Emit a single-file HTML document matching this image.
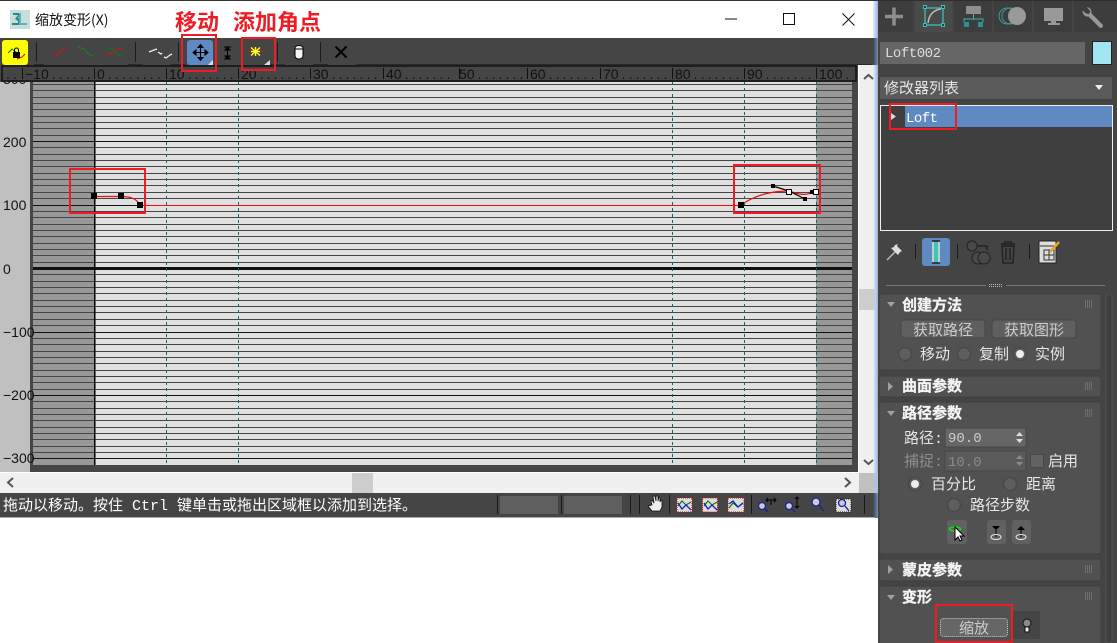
<!DOCTYPE html>
<html><head><meta charset="utf-8"><style>
html,body{margin:0;padding:0;background:#fff;width:1117px;height:643px;overflow:hidden}
svg{display:block}
text{white-space:pre}
.c{font-family:"Liberation Mono","WenQuanYi Zen Hei","Noto Sans CJK SC",monospace;font-size:15px;fill:#e6e6e6}
.h{font-family:"Liberation Mono","WenQuanYi Zen Hei","Noto Sans CJK SC",monospace;font-size:15px;fill:#f4f4f4;font-weight:bold;stroke:#f4f4f4;stroke-width:.3}
.r{font-family:"Liberation Sans",sans-serif;font-size:14px;fill:#111}
.y{font-family:"Liberation Sans",sans-serif;font-size:14px;fill:#111}
.m{font-family:"Liberation Mono",monospace;font-size:14px}
</style></head><body>
<svg width="1117" height="643" viewBox="0 0 1117 643" xmlns="http://www.w3.org/2000/svg">
<defs><linearGradient id="edge" x1="0" x2="1" y1="0" y2="0"><stop offset="0" stop-color="#f0f0f0"/><stop offset="1" stop-color="#8fb4e6"/></linearGradient>
<linearGradient id="edged" x1="0" x2="1" y1="0" y2="0"><stop offset="0" stop-color="#454545"/><stop offset="1" stop-color="#6a8cbc"/></linearGradient></defs>
<!-- window -->
<rect width="878" height="518" fill="#fff"/>
<rect width="878" height="1" fill="#333"/>
<rect x="873" y="1" width="5" height="37" fill="url(#edge)"/>
<rect x="10" y="10" width="20" height="19" fill="#c8dedd"/>
<path d="M13 13h8l-3 5 3 1v6h-9v-2h6v-2l-3-2 3-4h-5z" fill="#2a8a8a"/>
<path d="M21 13v10h6v2h-8V13z" fill="#5fb3b3"/>
<text x="35" y="25" font-family="'WenQuanYi Zen Hei','Noto Sans CJK SC',sans-serif" font-size="14" fill="#111">缩放变形(X)</text>
<path d="M725 19h12" stroke="#111"/>
<rect x="783.500" y="13.500" width="11" height="11" fill="none" stroke="#111"/>
<path d="M842.500 13.500l12 12M854.500 13.500l-12 12" stroke="#111"/>
<!-- toolbar -->
<rect x="0" y="38" width="873" height="27" fill="#454545"/>
<rect x="873" y="38" width="5" height="27" fill="url(#edged)"/>
<rect x="2" y="40" width="26" height="25" rx="3" fill="#ffff00"/>
<path d="M8 53l4-4 5 4" stroke="#0a7a0a" fill="none"/><path d="M17 59l5-2 3-3" stroke="#d00" fill="none"/>
<rect x="13" y="52" width="7" height="6" fill="#000"/><path d="M14.500 52v-2a2 2 0 0 1 4 0v2" stroke="#000" fill="none"/>
<g stroke="#1c1c1c"><path d="M36.500 42v20M135.500 42v20M178.500 42v20M277.500 42v20M320.500 42v20"/></g>
<g fill="#2a2a2a"><rect x="34" y="64" width="10" height="1"/><rect x="128" y="64" width="15" height="1"/><rect x="171" y="64" width="15" height="1"/><rect x="270" y="64" width="15" height="1"/><rect x="313" y="64" width="15" height="1"/><rect x="356" y="64" width="516" height="1"/></g>
<path d="M52 56l5-1 3-4 6-3" stroke="#d81010" fill="none"/>
<path d="M78 47l6 2 4 5 5 2" stroke="#0a8a1a" fill="none"/>
<path d="M106 55l6-2 4-3 6-2" stroke="#d81010" fill="none"/><path d="M106 47l6 2 4 4 6 3" stroke="#0a7a1a" fill="none"/>
<path d="M149 52l5-2 3-1m1 3l3 2 1-1m2 4l2 1 4-3 2-1" stroke="#eee" stroke-width="1.300" fill="none"/>
<rect x="187" y="40" width="26" height="25" rx="3" fill="#5f8ac1"/>
<path d="M208 65l5-5v5z" fill="#ddd"/>
<path d="M200.500 45v15M193 52.500h15M198 47.500l2.500-3 2.500 3zM198 57.500l2.500 3 2.500-3zM196 50l-3 2.500 3 2.500zM205 50l3 2.500-3 2.500z" stroke="#000" fill="#000"/>
<path d="M224 47h7M224 59h7M227.500 47v12M225 50l2.500-3 2.500 3zM225 56l2.500 3 2.500-3z" stroke="#000" fill="#000" stroke-width="1"/>
<path d="M248 51h16" stroke="#e01010" stroke-width="1.200"/>
<path d="M255.500 47v9M251 47.500l9 8M260 47.500l-9 8M251 51.500h9" stroke="#ffff20" stroke-width="1.400"/>
<path d="M264 65l6-5v5z" fill="#ddd"/>
<path d="M295 48a4 2.500 0 0 1 8 0v8a4 3 0 0 1-8 0z" fill="#f4f4f4" stroke="#000"/><path d="M295 49h8" stroke="#000"/>
<path d="M335.500 46.500l11 11M346.500 46.500l-11 11" stroke="#000" stroke-width="2"/>
<!-- graph -->
<rect x="0" y="81" width="31" height="392" fill="#c0c0c0"/>
<rect x="30" y="81" width="828" height="392" fill="#464646"/>
<rect x="33" y="82" width="61" height="383" fill="#989898"/>
<rect x="94" y="82" width="722" height="383" fill="#e0e0e0"/>
<rect x="816" y="82" width="36" height="383" fill="#989898"/>
<g fill="#454545">
<rect x="33" y="84" width="819" height="1"/><rect x="33" y="90" width="819" height="1"/><rect x="33" y="97" width="819" height="1"/><rect x="33" y="103" width="819" height="1"/><rect x="33" y="109" width="819" height="1"/><rect x="33" y="116" width="819" height="1"/><rect x="33" y="122" width="819" height="1"/><rect x="33" y="128" width="819" height="1"/><rect x="33" y="135" width="819" height="1"/><rect x="33" y="147" width="819" height="1"/><rect x="33" y="154" width="819" height="1"/><rect x="33" y="160" width="819" height="1"/><rect x="33" y="166" width="819" height="1"/><rect x="33" y="173" width="819" height="1"/><rect x="33" y="179" width="819" height="1"/><rect x="33" y="185" width="819" height="1"/><rect x="33" y="192" width="819" height="1"/><rect x="33" y="198" width="819" height="1"/><rect x="33" y="211" width="819" height="1"/><rect x="33" y="217" width="819" height="1"/><rect x="33" y="224" width="819" height="1"/><rect x="33" y="230" width="819" height="1"/><rect x="33" y="236" width="819" height="1"/><rect x="33" y="243" width="819" height="1"/><rect x="33" y="249" width="819" height="1"/><rect x="33" y="255" width="819" height="1"/><rect x="33" y="262" width="819" height="1"/><rect x="33" y="274" width="819" height="1"/><rect x="33" y="281" width="819" height="1"/><rect x="33" y="287" width="819" height="1"/><rect x="33" y="293" width="819" height="1"/><rect x="33" y="300" width="819" height="1"/><rect x="33" y="306" width="819" height="1"/><rect x="33" y="312" width="819" height="1"/><rect x="33" y="319" width="819" height="1"/><rect x="33" y="325" width="819" height="1"/><rect x="33" y="338" width="819" height="1"/><rect x="33" y="344" width="819" height="1"/><rect x="33" y="351" width="819" height="1"/><rect x="33" y="357" width="819" height="1"/><rect x="33" y="363" width="819" height="1"/><rect x="33" y="370" width="819" height="1"/><rect x="33" y="376" width="819" height="1"/><rect x="33" y="382" width="819" height="1"/><rect x="33" y="389" width="819" height="1"/><rect x="33" y="401" width="819" height="1"/><rect x="33" y="408" width="819" height="1"/><rect x="33" y="414" width="819" height="1"/><rect x="33" y="420" width="819" height="1"/><rect x="33" y="427" width="819" height="1"/><rect x="33" y="433" width="819" height="1"/><rect x="33" y="439" width="819" height="1"/><rect x="33" y="446" width="819" height="1"/><rect x="33" y="452" width="819" height="1"/>
</g>
<g fill="#111"><rect x="33" y="141" width="819" height="1"/><rect x="33" y="205" width="819" height="1"/><rect x="33" y="332" width="819" height="1"/><rect x="33" y="395" width="819" height="1"/><rect x="33" y="458" width="819" height="1"/><rect x="33" y="267" width="819" height="3"/></g>
<rect x="94" y="82" width="1.500" height="383" fill="#000"/>
<g stroke="#0c6a6a" stroke-dasharray="3 3" shape-rendering="crispEdges"><path d="M166.500 82v383M238.500 82v383M672.500 82v383M744.500 82v383M816.500 82v383"/></g>
<text x="3" y="84" class="y">300</text>
<text x="3" y="147" class="y">200</text>
<text x="3" y="210" class="y">100</text>
<text x="3" y="274" class="y">0</text>
<text x="3" y="337" class="y">−100</text>
<text x="3" y="400" class="y">−200</text>
<text x="3" y="463" class="y">−300</text>
<rect x="0" y="465" width="30" height="8" fill="#c0c0c0"/>
<!-- ruler -->
<rect x="0" y="65" width="858" height="17" fill="#454545"/>
<rect x="2" y="66" width="854" height="15" fill="#454545" stroke="#111" stroke-width="1.500"/>
<g stroke="#111"><path d="M22.500 68v11M94.500 68v11M166.500 68v11M238.500 68v11M310.500 68v11M383.500 68v11M459.500 68v11M527.500 68v11M600.500 68v11M672.500 68v11M744.500 68v11M816.500 68v11"/></g>
<text x="6" y="79" class="r" letter-spacing="3.100">..</text>
<text x="25" y="79" class="r">−10<tspan dx="3" letter-spacing="3.100">......</tspan></text>
<text x="97" y="79" class="r">0<tspan dx="3" letter-spacing="3.100">........</tspan></text>
<text x="169" y="79" class="r">10<tspan dx="3" letter-spacing="3.100">.......</tspan></text>
<text x="241" y="79" class="r">20<tspan dx="3" letter-spacing="3.100">.......</tspan></text>
<text x="313" y="79" class="r">30<tspan dx="3" letter-spacing="3.100">.......</tspan></text>
<text x="386" y="79" class="r">40<tspan dx="3" letter-spacing="3.100">.......</tspan></text>
<text x="459" y="79" class="r">50<tspan dx="3" letter-spacing="3.100">.......</tspan></text>
<text x="530" y="79" class="r">60<tspan dx="3" letter-spacing="3.100">.......</tspan></text>
<text x="603" y="79" class="r">70<tspan dx="3" letter-spacing="3.100">.......</tspan></text>
<text x="675" y="79" class="r">80<tspan dx="3" letter-spacing="3.100">.......</tspan></text>
<text x="747" y="79" class="r">90<tspan dx="3" letter-spacing="3.100">.......</tspan></text>
<text x="819" y="79" class="r">100<tspan dx="3" letter-spacing="3.100">.</tspan></text>
<!-- curves -->
<path d="M140 205.500H741" fill="none" stroke="#e81010" stroke-width="1" shape-rendering="crispEdges"/>
<path d="M94 196.500H121C130 196.500 136 198 140 205" fill="none" stroke="#e81010" stroke-width="1.200"/>
<path d="M725 205.500H741" stroke="#e81010" shape-rendering="crispEdges"/>
<path d="M741 205C755 195 772 191 789 191C800 195 806 196 816 191" fill="none" stroke="#e81010" stroke-width="1.200"/>
<path d="M773 186L789 191L805 199" stroke="#000" fill="none" stroke-width="1.200"/>
<path d="M811 192L816 191" stroke="#000"/>
<g fill="#000"><rect x="91" y="193" width="6" height="6"/><rect x="118" y="193" width="6" height="6"/><rect x="137" y="202" width="6" height="6"/><rect x="738" y="202" width="6" height="6"/><rect x="771" y="184" width="4" height="4"/><rect x="803" y="197" width="4" height="4"/><rect x="810" y="190" width="4" height="4"/></g>
<rect x="786.500" y="189.500" width="5" height="5" fill="#fff" stroke="#000"/>
<rect x="813.500" y="189.500" width="5" height="5" fill="#fff" stroke="#000"/>
<!-- scrollbars -->
<rect x="0" y="473" width="859" height="20" fill="#f0f0f0"/>
<rect x="352" y="473" width="21" height="20" fill="#cdcdcd"/>
<path d="M13 478l-5 4.500 5 4.500M845 478l5 4.500-5 4.500" fill="none" stroke="#555" stroke-width="2"/>
<rect x="858" y="65" width="1" height="408" fill="#fff"/>
<rect x="859" y="65" width="14" height="408" fill="#f0f0f0"/>
<rect x="873" y="65" width="5" height="408" fill="url(#edge)"/>
<rect x="859" y="289" width="16" height="21" fill="#cdcdcd"/>
<rect x="859" y="473" width="16" height="20" fill="#c0c0c0"/>
<rect x="875" y="473" width="3" height="20" fill="#a9c4e8"/>
<path d="M864 79l4.500-4 4.500 4M864 460l4.500 4 4.500-4" fill="none" stroke="#555" stroke-width="2"/>
<rect x="0" y="472" width="858" height="1" fill="#fff"/>
<!-- status -->
<rect x="0" y="493" width="873" height="25" fill="#454545"/>
<rect x="873" y="493" width="5" height="25" fill="url(#edged)"/>
<rect x="0" y="517" width="875" height="1" fill="#aaa"/>
<text x="3" y="510" class="c" style="fill:#fff">拖动以移动。按住 Ctrl 键单击或拖出区域框以添加到选择。</text>
<rect x="500" y="496" width="58" height="18" fill="#5f5f5f"/>
<rect x="564" y="496" width="58" height="18" fill="#5f5f5f"/>
<g stroke="#1a1a1a"><path d="M497.500 495v19M561.500 495v19M630.500 495v19M639.500 495v19M669.500 495v19M751.500 495v19M864.500 495v19"/></g>
<path d="M648 506l4 5h8l2-4v-6l-1-1-1 2v-4l-1-1-1 4v-5h-2v5l-1-5h-2l1 7-2-3-1 1 1 4z" fill="#eee" stroke="#111" stroke-width=".8"/>
<g>
<rect x="677" y="498" width="15" height="14" fill="#ddd" stroke="#d01010" stroke-dasharray="1 1"/>
<path d="M678 506l4-5 4 4 5-3" stroke="#0a7a0a" fill="none" stroke-width="1.200"/><path d="M678 503l4 6 4-4 5 5" stroke="#1020c0" fill="none" stroke-width="1.300"/>
<rect x="702.500" y="498" width="15" height="14" fill="#ddd" stroke="#d01010" stroke-dasharray="1 1"/>
<path d="M704 506l4-5 4 4 5-3" stroke="#0a7a0a" fill="none" stroke-width="1.200"/><path d="M704 503l4 6 4-4 5 5" stroke="#1020c0" fill="none" stroke-width="1.300"/>
<rect x="728" y="498" width="16" height="14" fill="#ddd" stroke="#d01010" stroke-dasharray="1 1"/>
<path d="M729 508l4-5 5 4 5-4" stroke="#0a7a0a" fill="none" stroke-width="1.200"/><path d="M729 504l4-3 5 6 5-4" stroke="#1020c0" fill="none" stroke-width="1.300"/>
</g>
<g fill="#ccc" stroke="#1a20a0" stroke-width="1.300">
<circle cx="762" cy="506" r="3.500"/><path d="M765 509l3 3" fill="none"/>
<circle cx="789" cy="506" r="3.500"/><path d="M792 509l3 3" fill="none"/>
<circle cx="816" cy="502" r="4"/><path d="M819 505l5 6" fill="none"/>
</g>
<path d="M766 500h10M768 498l-2 2 2 2M774 498l2 2-2 2M771 500v5M797 497v11M795 499l2-2 2 2M795 506l2 2 2-2" stroke="#000" fill="none"/>
<rect x="836" y="499" width="15" height="13" fill="#ddd" stroke="#222" stroke-dasharray="1 1"/>
<circle cx="842" cy="503" r="3.500" fill="#ccc" stroke="#1a20a0" stroke-width="1.300"/><path d="M845 506l4 5" stroke="#1a20a0" stroke-width="1.300"/>
<!-- annotations -->
<text x="175" y="30" font-family="'Noto Sans CJK SC',sans-serif" font-size="22" font-weight="bold" fill="#ee1c25">移动</text>
<text x="233" y="30" font-family="'Noto Sans CJK SC',sans-serif" font-size="22" font-weight="bold" fill="#ee1c25">添加角点</text>
<g fill="none" stroke="#ee1c25" stroke-width="2">
<rect x="182" y="35" width="34" height="36"/>
<rect x="242" y="38" width="33" height="32"/>
<rect x="70" y="169" width="75" height="44"/>
<rect x="734" y="165" width="86" height="48"/>
</g>
<!-- right panel -->
<rect x="878" y="0" width="239" height="643" fill="#444"/>
<rect x="878" y="0" width="239" height="1" fill="#2d2d2d"/>
<g fill="#3d3d3d"><rect x="878" y="1" width="35" height="31"/><rect x="954" y="1" width="38" height="31"/><rect x="994" y="1" width="38" height="31"/><rect x="1034" y="1" width="38" height="31"/><rect x="1074" y="1" width="43" height="31"/></g>
<rect x="915" y="1" width="37" height="31" fill="#4a4a4a"/>
<path d="M885 16.500h18M894 7.500v18" stroke="#8e8e8e" stroke-width="3.500"/>
<rect x="925" y="8" width="18" height="17" fill="none" stroke="#3db0b0" stroke-width="1.500"/>
<g fill="#333" stroke="#40bcbc"><rect x="923.500" y="5.500" width="3" height="3"/><rect x="941.500" y="5.500" width="3" height="3"/><rect x="923.500" y="23.500" width="3" height="3"/><rect x="941.500" y="23.500" width="3" height="3"/></g>
<path d="M928 23c1-8 5-13 13-14" fill="none" stroke="#bbb" stroke-width="1.500"/>
<rect x="966" y="6" width="15" height="8" fill="#8e8e8e"/>
<path d="M973.500 14v5M964 22v-3h19v3" fill="none" stroke="#3db0b0"/>
<rect x="964" y="22" width="5" height="5" fill="#2f9090"/><rect x="978" y="22" width="5" height="5" fill="#2f9090"/>
<circle cx="1007" cy="16" r="8" fill="none" stroke="#3a9a9a"/><circle cx="1010" cy="16" r="8" fill="none" stroke="#3a9a9a"/>
<circle cx="1017" cy="16" r="9" fill="#999"/>
<rect x="1044" y="8" width="19" height="13" fill="#999"/><rect x="1051" y="21" width="5" height="2" fill="#999"/><rect x="1048" y="23" width="12" height="2" fill="#999"/>
<path d="M1087 7.500l3.500 3.500-1.500 3-3-.5-3.500-3c0 4 2.500 6.500 6 6l11 11c2 1.500 4.500-1 3-3l-11-11c.5-4-2-6.500-5-6z" fill="#999"/>
<rect x="880" y="42" width="205" height="22" fill="#666"/>
<text x="885" y="57" class="m" fill="#ddd" textLength="56">Loft002</text>
<rect x="1092.500" y="41.500" width="19" height="23" fill="#9fe6f2" stroke="#222"/>
<rect x="880" y="77" width="232" height="22" fill="#5a5a5a"/>
<text x="884" y="93" class="c">修改器列表</text>
<path d="M1095 85h8l-4 5z" fill="#eee"/>
<rect x="880.500" y="105.500" width="232" height="125" fill="#3f3f3f" stroke="#eee"/>
<rect x="905" y="106" width="207" height="21" fill="#5f8ac1"/>
<path d="M891 113l5 3.500-5 3.500z" fill="#ddd"/>
<text x="906" y="122" class="m" fill="#fff" textLength="32">Loft</text>
<rect x="890" y="104" width="66" height="25" fill="none" stroke="#ee1c25" stroke-width="2"/>
<!-- stack icons -->
<path d="M887 260l8-8" stroke="#bbb" stroke-width="1.500"/>
<path d="M891 248l7 7 2-3 2-1-5-5 1-2-3 1-1 2z" fill="#ddd"/>
<g stroke="#1c1c1c"><path d="M915.500 244v15M957.500 244v15M1029.500 244v15"/></g>
<rect x="922" y="238" width="28" height="28" rx="3" fill="#5f8ac1"/>
<rect x="933" y="241" width="6" height="22" fill="#40c4b8" stroke="#ddd" stroke-width="1.500"/>
<path d="M932 241h8M932 263h8" stroke="#111" stroke-width="1.500"/>
<circle cx="972" cy="246" r="5" fill="#4a4a4a" stroke="#222"/>
<circle cx="978" cy="258" r="6" fill="#4a4a4a" stroke="#222"/><circle cx="984" cy="258" r="6" fill="#4a4a4a" stroke="#222"/>
<path d="M977 246h10v4" fill="none" stroke="#222" stroke-width="1.500"/>
<path d="M1001 244h14M1005 244v-2h6v2M1002 246l1 17h10l1-17zM1006 248v12M1010 248v12" fill="none" stroke="#222" stroke-width="1.500"/>
<rect x="1039" y="241" width="17" height="22" fill="#ddd" stroke="#222"/>
<path d="M1040 246h15M1044 250h10v10h-10zM1049 250v10M1044 255h10" stroke="#333" fill="none"/>
<path d="M1050 252l9-10" stroke="#e8a820" stroke-width="2.500"/>
<path d="M886 285.500h100M1006 285.500h99" stroke="#777"/>
<path d="M989 284.500h13M989 286.500h13" stroke="#bbb" stroke-dasharray="1 1"/>
<!-- rollouts -->
<g fill="#515151" stroke="#3f3f3f">
<rect x="879" y="294" width="222" height="76" rx="3"/>
<rect x="879" y="376" width="222" height="21" rx="3"/>
<rect x="879" y="402" width="222" height="152" rx="3"/>
<rect x="879" y="559" width="222" height="22" rx="3"/>
<rect x="879" y="586" width="222" height="60" rx="3"/>
</g>
<rect x="1106" y="294" width="6" height="349" rx="3" fill="#3d3d3d" stroke="#4f4f4f"/>
<path d="M1085 301h7M1085 303h7M1085 305h7M1085 307h7M1085 383h7M1085 385h7M1085 387h7M1085 389h7M1085 410h7M1085 412h7M1085 414h7M1085 416h7M1085 566h7M1085 568h7M1085 570h7M1085 572h7M1085 593h7M1085 595h7M1085 597h7M1085 599h7" stroke="#8a8a8a" stroke-dasharray="1 1"/>
<g fill="#a0a0a0">
<path d="M887 302h8l-4 5z"/><path d="M888 382v9l5-4.500z"/><path d="M887 411h8l-4 5z"/><path d="M888 565v9l5-4.500z"/><path d="M887 595h8l-4 5z"/>
</g>
<text x="902" y="310" class="h">创建方法</text>
<text x="902" y="391" class="h">曲面参数</text>
<text x="902" y="418" class="h">路径参数</text>
<text x="902" y="575" class="h">蒙皮参数</text>
<text x="902" y="602" class="h">变形</text>
<rect x="901" y="320" width="84" height="18" rx="3" fill="#5f5f5f" stroke="#474747"/>
<rect x="992" y="320" width="84" height="18" rx="3" fill="#5f5f5f" stroke="#474747"/>
<text x="913" y="335" class="c" style="fill:#ccc">获取路径</text>
<text x="1004" y="335" class="c" style="fill:#ccc">获取图形</text>
<g fill="#5e5e5e" stroke="#484848" stroke-width="1.500"><circle cx="905" cy="354" r="6.500"/><circle cx="964" cy="354" r="6.500"/><circle cx="1020" cy="354" r="6.500"/><circle cx="915" cy="484" r="6.500"/><circle cx="1010" cy="484" r="6.500"/><circle cx="954" cy="505" r="6.500"/></g>
<circle cx="1020" cy="354" r="4" fill="#eee"/><circle cx="915" cy="484" r="4" fill="#eee"/>
<text x="920" y="359" class="c">移动</text><text x="979" y="359" class="c">复制</text><text x="1035" y="359" class="c">实例</text>
<text x="904" y="443" class="c">路径:</text>
<rect x="945" y="428" width="81" height="19" fill="#666" stroke="#474747"/>
<text x="948" y="442" class="m" fill="#ccc">90.0</text>
<path d="M1016 436l3.500-4 3.500 4zM1016 439l3.500 4 3.500-4z" fill="#ddd"/>
<text x="904" y="466" class="c" style="fill:#8e8e8e">捕捉:</text>
<rect x="945" y="451" width="81" height="20" fill="#5a5a5a" stroke="#474747"/>
<text x="948" y="466" class="m" fill="#8a8a8a">10.0</text>
<path d="M1016 459l3.500-4 3.500 4zM1016 462l3.500 4 3.500-4z" fill="#888"/>
<rect x="1030.500" y="454.500" width="13" height="13" fill="#626262" stroke="#484848"/>
<text x="1048" y="466" class="c">启用</text>
<text x="931" y="489" class="c">百分比</text>
<text x="1026" y="489" class="c">距离</text>
<text x="970" y="510" class="c">路径步数</text>
<g fill="#616161"><rect x="947" y="520" width="20" height="24" rx="3"/><rect x="987" y="520" width="19" height="24" rx="3"/><rect x="1012" y="520" width="19" height="24" rx="3"/></g>
<ellipse cx="955" cy="529" rx="5.500" ry="2" fill="none" stroke="#10e010" stroke-width="1.500"/>
<path d="M955 527v13l3-3 2 4 2-1-2-4h4z" fill="#fff" stroke="#000"/>
<path d="M992 526h8l-4 4z" fill="#000"/><path d="M996 530v7" stroke="#000"/><ellipse cx="996" cy="537" rx="5" ry="2.500" fill="none" stroke="#eee"/>
<path d="M1017 530h8l-4-4z" fill="#000"/><path d="M1021 530v7" stroke="#000"/><ellipse cx="1021" cy="537" rx="5" ry="2.500" fill="none" stroke="#eee"/>
<rect x="1012" y="611" width="28" height="28" fill="#454545"/>
<circle cx="1027" cy="623" r="4" fill="#888" stroke="#111"/><rect x="1025" y="627" width="4" height="5" fill="#eee" stroke="#111"/>
<rect x="940.500" y="618.500" width="67" height="18" rx="3" fill="#666" stroke="#ccc" stroke-dasharray="1 1"/>
<text x="959" y="633" class="c" style="fill:#ccc">缩放</text>
<rect x="936" y="605" width="76" height="37" fill="none" stroke="#ee1c25" stroke-width="2"/>
</svg>
</body></html>
